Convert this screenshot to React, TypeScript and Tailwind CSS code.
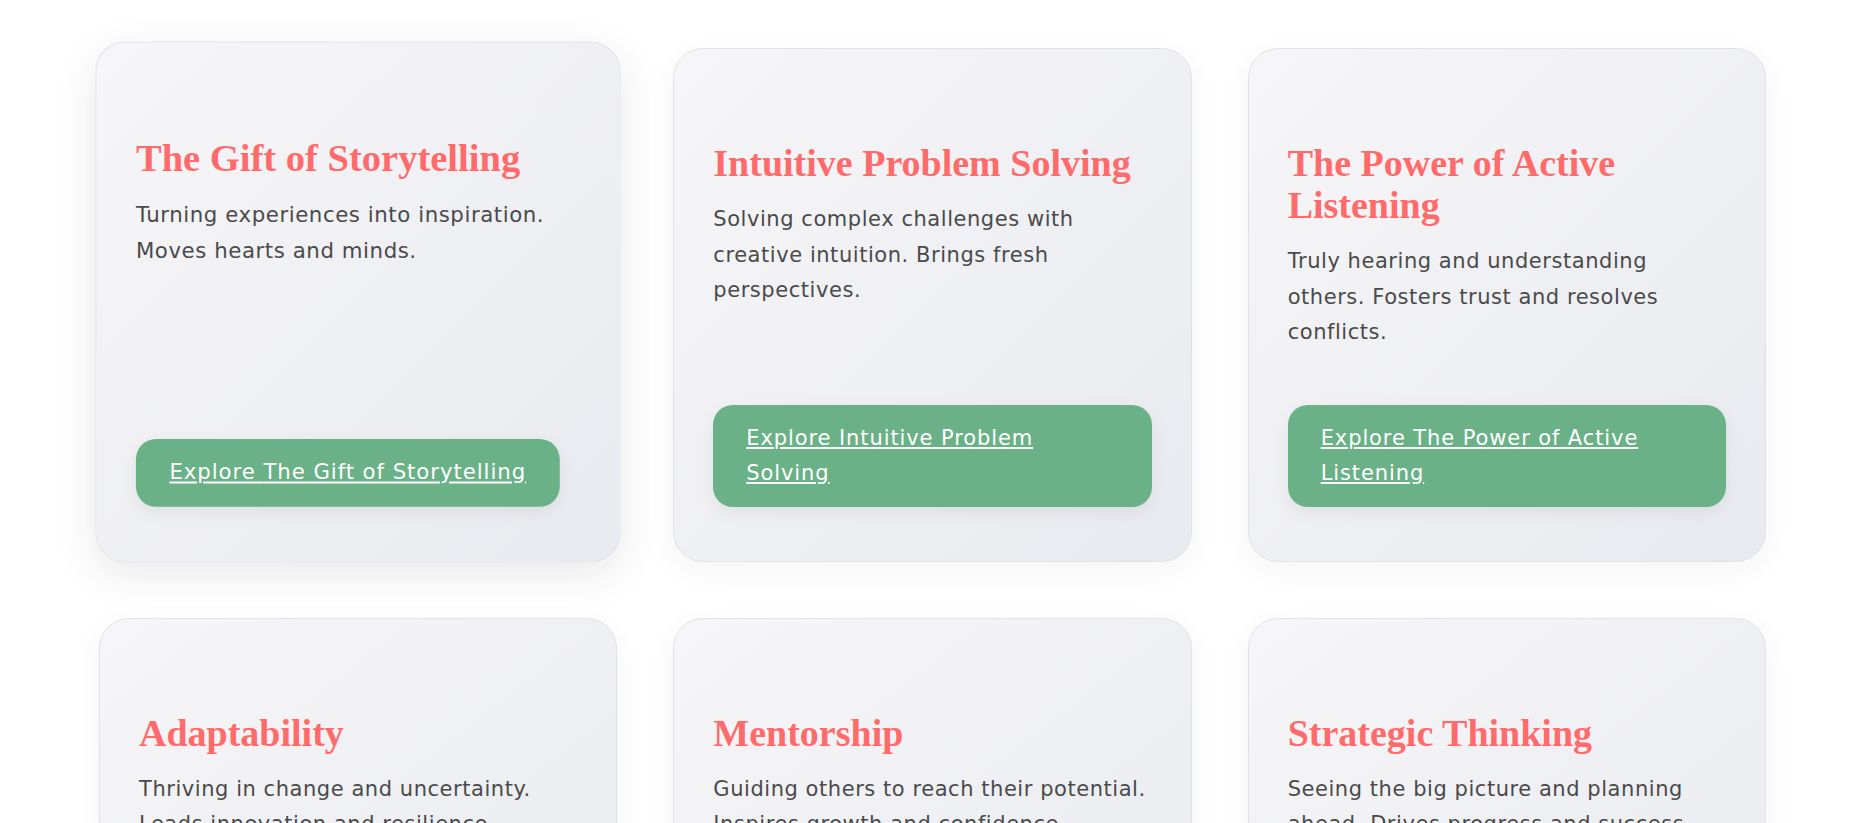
const skills = [
  {
    title: "The Gift of Storytelling",
    text: "Turning experiences into inspiration. Moves hearts and minds.",
    active: true,
  },
  {
    title: "Intuitive Problem Solving",
    text: "Solving complex challenges with creative intuition. Brings fresh perspectives.",
  },
  {
    title: "The Power of Active Listening",
    text: "Truly hearing and understanding others. Fosters trust and resolves conflicts.",
  },
  {
    title: "Adaptability",
    text: "Thriving in change and uncertainty. Leads innovation and resilience.",
  },
  {
    title: "Mentorship",
    text: "Guiding others to reach their potential. Inspires growth and confidence.",
  },
  {
    title: "Strategic Thinking",
    text: "Seeing the big picture and planning ahead. Drives progress and success.",
  },
];

interface SkillCardProps {
  title: string;
  text: string;
  active?: boolean;
}

function SkillCard({ title, text, active }: SkillCardProps) {
  return (
    <div
      className={`flex flex-col rounded-[30px] border border-[#e1e2e8] bg-gradient-to-br from-[#f6f6f8] to-[#e9eaef] px-[39px] pt-[93px] pb-[54px] ${
        active
          ? "-translate-y-[3px] scale-[1.014] shadow-[0_12px_40px_rgba(40,40,60,0.1)]"
          : "shadow-[0_8px_28px_rgba(40,40,60,0.05)]"
      }`}
    >
      <h3 className="font-['Liberation_Serif',serif] text-[38px] font-bold leading-[42px] text-[#ff6b6b]">
        {title}
      </h3>
      <p className="mt-[18px] mb-[54px] font-['DejaVu_Sans',sans-serif] text-[21px] leading-[35.5px] tracking-[0.55px] text-[#4a4a4a]">
        {text}
      </p>
      <div className="mt-auto">
        <a
          href="#"
          className="inline-block rounded-[20px] bg-[#6bb187] px-[33px] py-[16px] font-['DejaVu_Sans',sans-serif] text-[21px] leading-[35px] tracking-[0.9px] text-white underline shadow-[0_6px_16px_rgba(40,60,50,0.08)]"
        >
          Explore {title}
        </a>
      </div>
    </div>
  );
}

export default function App() {
  return (
    <div className="min-h-screen bg-white px-[99px] pt-[48px] pb-16">
      <div className="grid grid-cols-3 gap-[56px]">
        {skills.map((s) => (
          <SkillCard key={s.title} title={s.title} text={s.text} active={s.active} />
        ))}
      </div>
    </div>
  );
}
